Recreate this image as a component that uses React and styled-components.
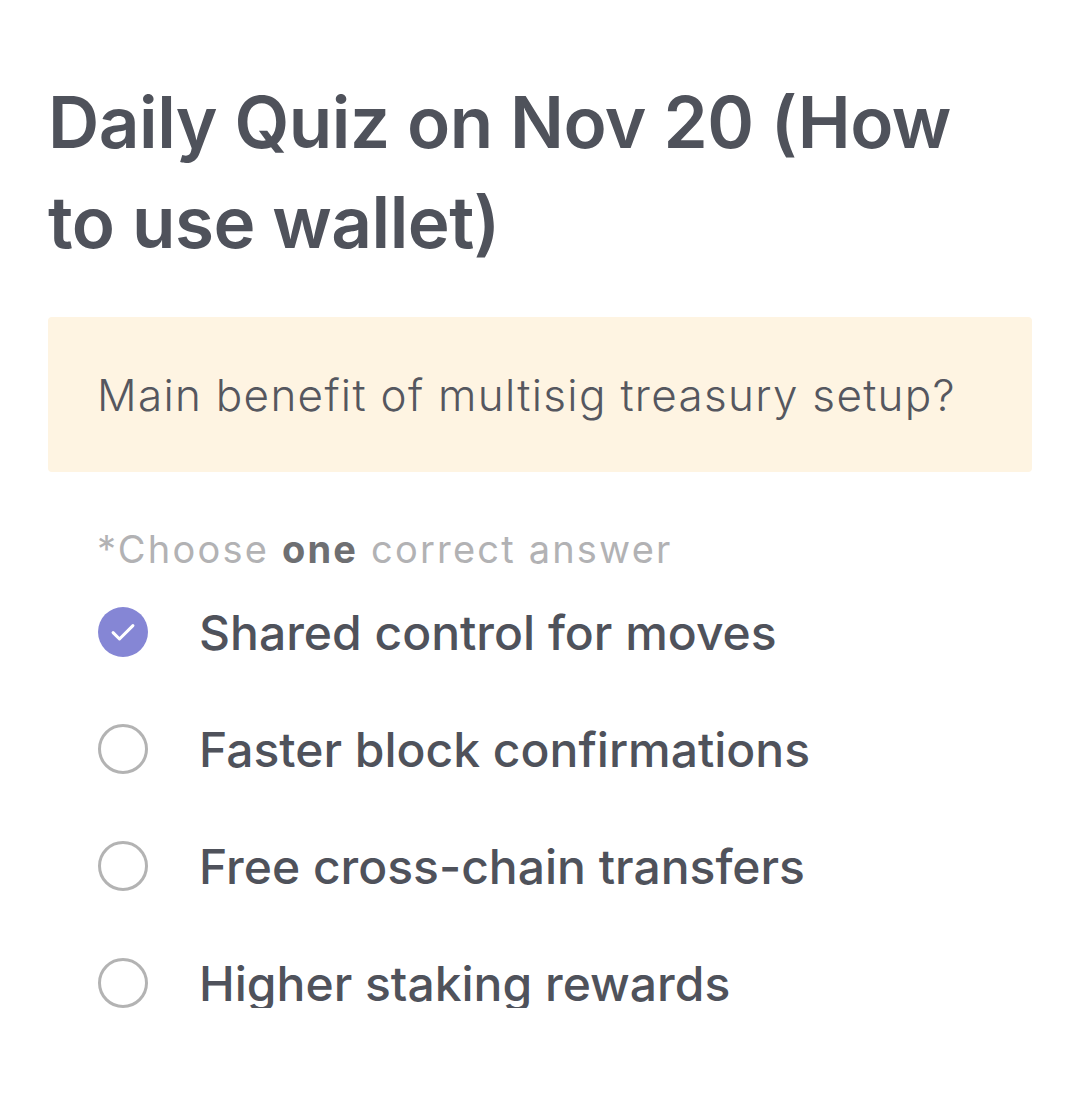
import React from 'react';
import styled, {createGlobalStyle} from 'styled-components';

const GlobalStyle = createGlobalStyle`
  html, body {
    margin: 0;
    padding: 0;
    background: #ffffff;
  }
  body {
    font-family: Inter, "Noto Sans", sans-serif;
  }
`;

const Page = styled.div`
  display: flex;
  flex-direction: column;
  padding: 72px 48px 0 48px;
  width: 1080px;
  box-sizing: border-box;
`;

const Title = styled.h1`
  margin: 0;
  font-size: 71px;
  line-height: 100px;
  font-weight: 600;
  letter-spacing: -0.5px;
  color: #4f525b;
`;

const QuestionBox = styled.div`
  display: flex;
  align-items: center;
  margin-top: 45px;
  height: 155px;
  padding: 0 49px;
  border-radius: 4px;
  background: #fef4e2;
  font-size: 44px;
  font-weight: 300;
  letter-spacing: 1.3px;
  color: #55575f;
`;

const Hint = styled.div`
  margin: 52px 0 0 49px;
  font-size: 38px;
  line-height: 50px;
  letter-spacing: 2.2px;
  color: #b2b2b4;
  & > b {
    font-weight: 700;
    color: #6e6f72;
  }
`;

const Options = styled.ul`
  list-style: none;
  margin: 33px 0 0 50px;
  padding: 0;
  display: flex;
  flex-direction: column;
  gap: 67px;
`;

const Option = styled.li`
  display: flex;
  align-items: center;
  gap: 51px;
  height: 50px;
  font-size: 48px;
  font-weight: 500;
  color: #4f525b;
`;

const Radio = styled.span`
  display: flex;
  align-items: center;
  justify-content: center;
  flex: 0 0 auto;
  width: 50px;
  height: 50px;
  box-sizing: border-box;
  border-radius: 50%;
  border: ${props => (props.checked ? 'none' : '3px solid #b3b3b3')};
  background: ${props => (props.checked ? '#8586d5' : 'transparent')};
`;

const options = [
  {label: 'Shared control for moves', checked: true},
  {label: 'Faster block confirmations'},
  {label: 'Free cross-chain transfers'},
  {label: 'Higher staking rewards'},
];

const Check = () => (
  <svg width="28" height="28" viewBox="0 0 24 24" fill="none">
    <path d="M3.5 12.5l5.5 5.5L20.5 6.5" stroke="#ffffff" strokeWidth="2.6" strokeLinecap="round" strokeLinejoin="round" />
  </svg>
);

export default function App() {
  return (
    <>
      <GlobalStyle />
      <Page>
        <Title>Daily Quiz on Nov 20 (How to use wallet)</Title>
        <QuestionBox>Main benefit of multisig treasury setup?</QuestionBox>
        <Hint>
          *Choose <b>one</b> correct answer
        </Hint>
        <Options>
          {options.map(opt => (
            <Option key={opt.label}>
              <Radio checked={opt.checked}>{opt.checked && <Check />}</Radio>
              {opt.label}
            </Option>
          ))}
        </Options>
      </Page>
    </>
  );
}
